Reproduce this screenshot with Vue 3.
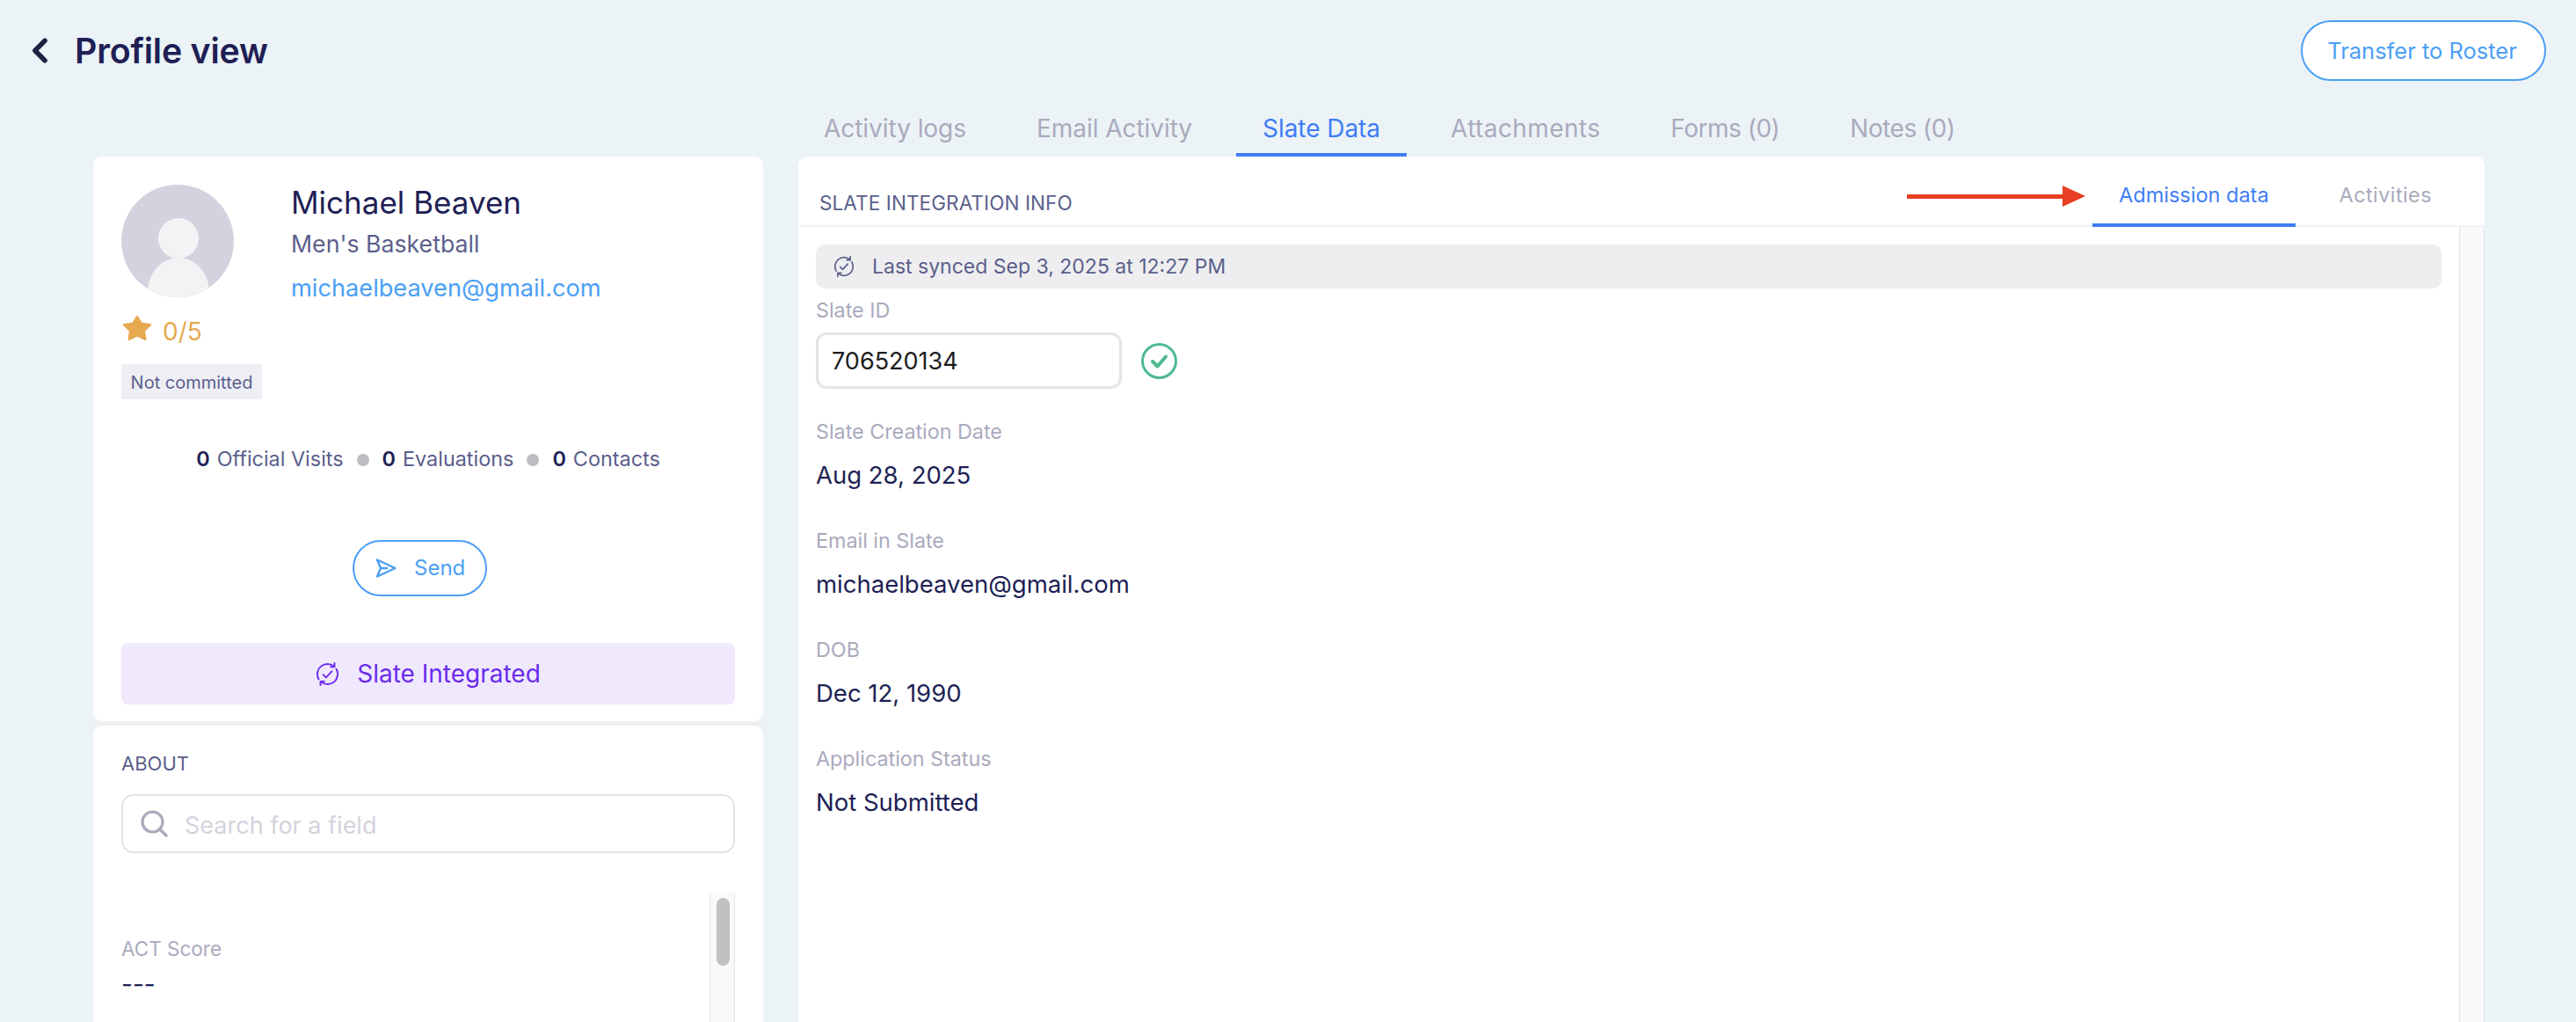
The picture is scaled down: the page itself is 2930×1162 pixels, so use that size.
<script setup>
const tabs = [
  { label: 'Activity logs' },
  { label: 'Email Activity' },
  { label: 'Slate Data', active: true },
  { label: 'Attachments', spread: true },
  { label: 'Forms (0)', tight: true },
  { label: 'Notes (0)', tight: true },
]
const fields = [
  { label: 'Slate Creation Date', value: 'Aug 28, 2025' },
  { label: 'Email in Slate', value: 'michaelbeaven@gmail.com' },
  { label: 'DOB', value: 'Dec 12, 1990' },
  { label: 'Application Status', value: 'Not Submitted' },
]
</script>

<template>
  <div class="page">
    <header class="topbar">
      <div class="title-wrap">
        <svg class="back" viewBox="0 0 19 29" fill="none">
          <path d="M15 3.200 L3.800 14.500 L15 25.800" stroke="#1d2142" stroke-width="5.500" stroke-linecap="round" stroke-linejoin="round" />
        </svg>
        <h1 class="title">Profile view</h1>
      </div>
      <button class="transfer">Transfer to Roster</button>
    </header>

    <nav class="tabs">
      <div
        v-for="t in tabs"
        :key="t.label"
        class="tab"
        :class="{ active: t.active, spread: t.spread, tight: t.tight }"
      >{{ t.label }}</div>
    </nav>

    <main class="columns">
      <aside class="left">
        <section class="card profile">
          <div class="identity">
            <div class="avatar-col">
              <svg class="avatar" viewBox="0 0 128 128">
                <defs>
                  <clipPath id="avatar-clip"><circle cx="64" cy="64" r="64" /></clipPath>
                </defs>
                <circle cx="64" cy="64" r="64" fill="#d3d2de" />
                <g clip-path="url(#avatar-clip)" fill="#f3f3f6">
                  <ellipse cx="65" cy="61" rx="23" ry="23" />
                  <ellipse cx="65" cy="122" rx="35" ry="39" />
                </g>
              </svg>
              <div class="rating">
                <svg class="star" viewBox="0 0 32 30">
                  <path d="M16 2.500 L20.500 10 L30.500 11.500 L23.500 18 L25 27.500 L16 23 L7 27.500 L8.500 18 L1.500 11.500 L11.500 10 Z" fill="#e6a950" stroke="#e6a950" stroke-width="3" stroke-linejoin="round" />
                </svg>
                <span>0/5</span>
              </div>
            </div>
            <div class="who">
              <div class="name">Michael Beaven</div>
              <div class="sport">Men's Basketball</div>
              <div class="email">michaelbeaven@gmail.com</div>
            </div>
          </div>
          <div class="badge">Not committed</div>
          <div class="stats">
            <b>0</b><span>Official Visits</span><i class="dot"></i>
            <b>0</b><span>Evaluations</span><i class="dot"></i>
            <b>0</b><span>Contacts</span>
          </div>
          <button class="send">
            <svg class="send-icon" viewBox="0 0 24 24" fill="none">
              <path d="M2 2.500 L22.500 12 L2 21.500 L6 12 Z M6 12 H13" stroke="#4b9ff5" stroke-width="2.400" stroke-linejoin="round" stroke-linecap="round" />
            </svg>
            <span>Send</span>
          </button>
          <div class="slate-banner">
            <svg class="sync sync-lg" viewBox="0 0 28 28" fill="none" stroke="#6b2bee" stroke-width="2" stroke-linecap="round" stroke-linejoin="round">
              <path d="M3.600 20 A12 12 0 0 1 21.700 4.800" />
              <path d="M24.400 8 A12 12 0 0 1 6.300 23.200" />
              <path d="M22.300 1 V5.500 H17.800" />
              <path d="M5.700 27 V22.500 H10.200" />
              <path d="M9 14.700 L12.300 18 L19 10.700" />
            </svg>
            <span>Slate Integrated</span>
          </div>
        </section>

        <div class="divider"></div>

        <section class="card about">
          <div class="about-title">ABOUT</div>
          <div class="search">
            <svg class="search-icon" viewBox="0 0 31 31" fill="none" stroke="#aaa9bd" stroke-width="3.200" stroke-linecap="round">
              <circle cx="13.500" cy="13.500" r="11.500" />
              <path d="M22.500 22.500 L29 29" />
            </svg>
            <span>Search for a field</span>
          </div>
          <div class="about-body">
            <div class="about-list">
              <div class="about-label">ACT Score</div>
              <div class="about-value">---</div>
            </div>
            <div class="about-scroll"><div class="about-thumb"></div></div>
          </div>
        </section>
      </aside>

      <section class="card detail">
        <div class="detail-head">
          <div class="detail-title">SLATE INTEGRATION INFO</div>
          <div class="subtabs">
            <svg class="arrow" viewBox="0 0 203 24">
              <path d="M0 10 H177 V0 L203 12 L177 24 V15 H0 Z" fill="#e93f23" />
            </svg>
            <div class="subtab active">Admission data</div>
            <div class="subtab">Activities</div>
          </div>
        </div>
        <div class="detail-body">
          <div class="detail-content">
            <div class="synced">
              <svg class="sync sync-sm" viewBox="0 0 28 28" fill="none" stroke="#5b5f8c" stroke-width="2" stroke-linecap="round" stroke-linejoin="round">
                <path d="M3.600 20 A12 12 0 0 1 21.700 4.800" />
                <path d="M24.400 8 A12 12 0 0 1 6.300 23.200" />
                <path d="M22.300 1 V5.500 H17.800" />
                <path d="M5.700 27 V22.500 H10.200" />
                <path d="M9 14.700 L12.300 18 L19 10.700" />
              </svg>
              <span>Last synced Sep 3, 2025 at 12:27 PM</span>
            </div>
            <div class="label first">Slate ID</div>
            <div class="id-row">
              <div class="id-input">706520134</div>
              <svg class="check" viewBox="0 0 41 41" fill="none">
                <circle cx="20.500" cy="20.500" r="19" stroke="#4fb98f" stroke-width="3" />
                <path d="M13 21 L18.500 26.500 L28 15.500" stroke="#4fb98f" stroke-width="4" stroke-linecap="round" stroke-linejoin="round" />
              </svg>
            </div>
            <div v-for="f in fields" :key="f.label" class="field">
              <div class="label">{{ f.label }}</div>
              <div class="value">{{ f.value }}</div>
            </div>
          </div>
          <div class="detail-scroll"></div>
        </div>
      </section>
    </main>
  </div>
</template>

<style>
html, body { margin: 0; background: #ecf3f7; overflow: hidden; }
</style>

<style scoped>
.page {
  height: 1162px;
  overflow: hidden;
  background: #ecf3f7;
  font-family: Inter, "Liberation Sans", sans-serif;
  color: #201f55;
  display: flex;
  flex-direction: column;
}
.topbar {
  display: flex;
  justify-content: space-between;
  align-items: center;
  height: 69px;
  padding: 23px 34px 0 36px;
  flex: none;
}
.title-wrap { display: flex; align-items: center; gap: 30px; }
.back { width: 19px; height: 29px; }
.title { margin: 0; font-size: 39.300px; font-weight: 600; line-height: 46px; color: #201f55; letter-spacing: -0.2px; }
.transfer {
  width: 279px;
  height: 69px;
  box-sizing: border-box;
  background: #fff;
  border: 2px solid #4b9ff5;
  border-radius: 35px;
  color: #4b9ff5;
  font: 400 25.500px/1 Inter, sans-serif;
  padding: 0 3px 0 0;
}
.tabs {
  display: flex;
  gap: 20px;
  margin: 23px 0 0 907px;
  height: 63px;
  flex: none;
}
.tab {
  padding: 0 30px;
  font-size: 28px;
  line-height: 62px;
  color: #aaaabd;
  box-sizing: border-box;
  height: 63px;
  border-bottom: 4px solid transparent;
  white-space: nowrap;
  letter-spacing: -0.05px;
}
.tab.spread { letter-spacing: 0.4px; }
.tab.tight { letter-spacing: -0.5px; }
.tab.active { color: #3f7df6; border-bottom-color: #3f7df6; }
.columns {
  flex: 1;
  min-height: 0;
  display: grid;
  grid-template-columns: 762px 1918px;
  gap: 40px;
  padding-left: 106px;
}
.left { display: flex; flex-direction: column; min-height: 0; }
.card { background: #fff; border-radius: 10px; }
.divider { height: 5px; flex: none; background: #eeeef0; }
.profile { height: 642px; box-sizing: border-box; padding: 32px; flex: none; }
.identity { display: flex; gap: 65px; height: 204px; }
.avatar-col { width: 128px; flex: none; }
.avatar { width: 128px; height: 128px; display: block; }
.rating { display: flex; align-items: center; gap: 13px; margin: 20px 0 0 2px; color: #e6a950; font-size: 28px; line-height: 30px; }
.rating span { position: relative; top: 4px; }
.star { width: 32px; height: 30px; }
.name { font-size: 35px; line-height: 44px; margin-top: -2px; color: #201f55; }
.sport { font-size: 26.700px; line-height: 32px; margin-top: 9px; color: #5b5f8c; }
.email { font-size: 27.200px; line-height: 32px; margin-top: 19px; color: #4b9ff5; }
.badge {
  display: inline-block;
  width: 160px;
  height: 40px;
  box-sizing: border-box;
  background: #eeeff5;
  color: #5b5f8c;
  font-size: 20px;
  line-height: 43px;
  text-align: center;
  white-space: nowrap;
  vertical-align: top;
}
.stats {
  display: flex;
  align-items: center;
  justify-content: center;
  height: 30px;
  margin-top: 52px;
  font-size: 23.400px;
  color: #5b5f8c;
}
.stats b { color: #201f55; font-weight: 600; margin-right: 8px; }
.dot { width: 14px; height: 14px; border-radius: 50%; background: #bdbdc1; margin: 4px 15px 0; }
.send {
  display: flex;
  align-items: center;
  gap: 20px;
  width: 153px;
  height: 64px;
  box-sizing: border-box;
  margin: 78px 0 0 263px;
  padding: 0 0 0 24px;
  background: #fff;
  border: 2px solid #4b9ff5;
  border-radius: 32px;
  color: #4b9ff5;
  font: 400 24px/1 Inter, sans-serif;
}
.send-icon { width: 24px; height: 24px; flex: none; }
.slate-banner {
  display: flex;
  align-items: center;
  justify-content: center;
  gap: 20px;
  height: 70px;
  margin-top: 53px;
  background: #f0e9fd;
  border-radius: 8px;
  color: #6b2bee;
  font-size: 28px;
}
.sync-lg { width: 27px; height: 27px; }
.sync-sm { width: 24px; height: 24px; flex: none; }
.about { flex: 1; min-height: 0; padding: 28px 32px 0; display: flex; flex-direction: column; border-radius: 10px 10px 0 0; }
.about-title { font-size: 22px; line-height: 30px; color: #5b5f8c; }
.search {
  display: flex;
  align-items: center;
  gap: 19px;
  height: 67px;
  box-sizing: border-box;
  margin-top: 20px;
  padding-left: 20px;
  border: 2.500px solid #e3e3e8;
  border-radius: 14px;
  color: #d3d3dc;
  font-size: 27px;
}
.search span { padding-top: 3px; }
.search-icon { width: 31px; height: 31px; flex: none; }
.about-body { flex: 1; min-height: 0; display: flex; justify-content: space-between; margin-top: 45px; }
.about-list { padding-top: 50px; }
.about-label { font-size: 22.500px; line-height: 28px; color: #aaaabd; }
.about-value { font-size: 28px; line-height: 34px; margin-top: 9px; color: #201f55; }
.about-scroll {
  width: 29px;
  box-sizing: border-box;
  background: #f9f9f9;
  border-left: 1px solid #e4e4e4;
  border-right: 1px solid #e4e4e4;
  padding: 6px 5px 0 7px;
}
.about-thumb { height: 77px; background: #c1c1c1; border-radius: 8px; }
.detail { display: flex; flex-direction: column; min-height: 0; border-radius: 10px 10px 0 0; }
.detail-head {
  display: flex;
  justify-content: space-between;
  height: 80px;
  box-sizing: border-box;
  flex: none;
  padding: 0 30px 0 24px;
  border-bottom: 2px solid #f0f0f3;
}
.detail-title { font-size: 22.500px; line-height: 30px; margin-top: 38px; color: #5b5f8c; letter-spacing: 0.1px; }
.subtabs { display: flex; gap: 20px; position: relative; height: 80px; }
.arrow { position: absolute; left: -211px; top: 33px; width: 203px; height: 24px; }
.subtab {
  padding: 0 30px;
  height: 80px;
  box-sizing: border-box;
  border-bottom: 4px solid transparent;
  font-size: 23.500px;
  line-height: 88px;
  color: #aaaabd;
  white-space: nowrap;
  letter-spacing: 0.4px;
}
.subtab.active { color: #3f7df6; border-bottom-color: #3f7df6; letter-spacing: 0; }
.detail-body { flex: 1; min-height: 0; display: flex; justify-content: space-between; }
.detail-content { flex: 1; padding: 20px 20px 0 20px; }
.synced {
  display: flex;
  align-items: center;
  gap: 20px;
  height: 50px;
  padding-left: 20px;
  background: #eeeef0;
  border-radius: 10px;
  color: #5b5f8c;
  font-size: 23px;
}
.label { font-size: 23.300px; line-height: 28px; color: #aaaabd; }
.label.first { margin-top: 11px; }
.id-row { display: flex; align-items: center; gap: 22px; margin-top: 11px; }
.id-input {
  width: 348px;
  height: 64px;
  box-sizing: border-box;
  border: 3px solid #e3e3e8;
  border-radius: 12px;
  padding-left: 15px;
  color: #1c1c1c;
  font-size: 27px;
  line-height: 60px;
}
.check { width: 41px; height: 41px; }
.field { height: 124px; box-sizing: border-box; padding-top: 35px; }
.value { font-size: 27.500px; line-height: 34px; margin-top: 18px; color: #201f55; }
.detail-scroll {
  width: 29px;
  box-sizing: border-box;
  background: #f9f9f9;
  border-left: 1px solid #e4e4e4;
  border-right: 1px solid #e4e4e4;
}
</style>
